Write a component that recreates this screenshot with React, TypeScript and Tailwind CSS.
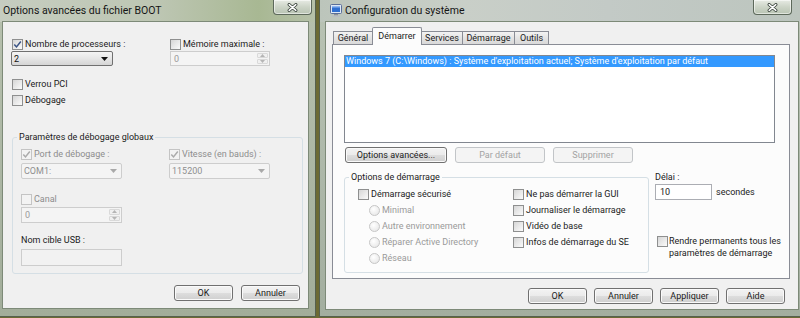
import React from "react";

const txt = "text-[9px] leading-[12px]";

function Check({ checked = false, disabled = false, className = "" }: { checked?: boolean; disabled?: boolean; className?: string }) {
  return (
    <span
      className={`flex h-[11px] w-[11px] shrink-0 items-center justify-center border ${
        disabled ? "border-[#c4c4c4] bg-[#f3f3f3]" : "border-[#8e8f8f] bg-[linear-gradient(135deg,#d6d6d6,#fbfbfb)]"
      } ${className}`}
    >
      {checked ? (
        <svg width="9" height="9" viewBox="0 0 9 9">
          <path d="M1.3 4.4 3.5 6.9 7.8 1.5" fill="none" stroke={disabled ? "#ababab" : "#3a5385"} strokeWidth="1.5" />
        </svg>
      ) : null}
    </span>
  );
}

function Radio() {
  return (
    <span className="h-[11px] w-[11px] shrink-0 rounded-full border border-[#c6c6c6] bg-[radial-gradient(circle_at_40%_35%,#ffffff,#e3e3e3)]" />
  );
}

function Btn({ label, className = "", disabled = false }: { label: string; className?: string; disabled?: boolean }) {
  return (
    <div
      className={`flex h-[16px] shrink-0 items-center justify-center rounded-[3px] border ${txt} ${
        disabled
          ? "border-[#c2c5c8] bg-[#f4f4f4] text-[#a3a3a3]"
          : "border-[#707070] bg-[linear-gradient(180deg,#f3f3f3_0%,#ebebeb_48%,#dddddd_52%,#cfcfcf_100%)] text-[#1b1b1b] shadow-[inset_0_0_0_1px_#fafafa]"
      } ${className}`}
    >
      {label}
    </div>
  );
}

function Combo({ value, disabled = false, className = "" }: { value: string; disabled?: boolean; className?: string }) {
  return (
    <div
      className={`flex items-center justify-between rounded-[2px] border pl-[2px] pr-[4px] ${txt} ${
        disabled
          ? "border-[#cdcdcd] bg-[#f4f4f4] text-[#8f8f8f]"
          : "border-[#707070] bg-[linear-gradient(180deg,#f4f4f4,#e6e6e6_50%,#d5d5d5)] text-[#111111]"
      } ${className}`}
    >
      <span>{value}</span>
      <svg width="7" height="4" viewBox="0 0 7 4">
        <path d="M0 0h7L3.5 4z" fill={disabled ? "#a9a9a9" : "#111111"} />
      </svg>
    </div>
  );
}

function Spin({ value, className = "" }: { value: string; className?: string }) {
  return (
    <div className={`flex items-stretch border border-[#cdcdcd] bg-[#f4f4f4] ${className}`}>
      <span className={`flex flex-1 items-center pl-[3px] text-[#9a9a9a] ${txt}`}>{value}</span>
      <div className="flex w-[12px] flex-col gap-px p-px pl-0">
        <div className="flex flex-1 items-center justify-center rounded-[1px] border border-[#d9d9d9] bg-[#f0f0f0]">
          <svg width="5" height="3" viewBox="0 0 5 3">
            <path d="M0 3h5L2.5 0z" fill="#b5b5b5" />
          </svg>
        </div>
        <div className="flex flex-1 items-center justify-center rounded-[1px] border border-[#d9d9d9] bg-[#f0f0f0]">
          <svg width="5" height="3" viewBox="0 0 5 3">
            <path d="M0 0h5L2.5 3z" fill="#b5b5b5" />
          </svg>
        </div>
      </div>
    </div>
  );
}

function Close({ className = "" }: { className?: string }) {
  return (
    <div
      className={`flex h-[15px] w-[39px] shrink-0 items-center justify-center rounded-b-[4px] border border-t-0 border-[#5d695b] bg-[linear-gradient(180deg,#e7ebe4,#ccd4c7_50%,#b9c4b3)] shadow-[inset_0_0_0_1px_rgba(255,255,255,0.55)] ${className}`}
    >
      <svg width="11" height="9" viewBox="0 0 11 9">
        <path d="M2.2 1.6 8.8 7.4 M8.8 1.6 2.2 7.4" stroke="#37413a" strokeWidth="3.2" strokeLinecap="round" />
        <path d="M2.2 1.6 8.8 7.4 M8.8 1.6 2.2 7.4" stroke="#ffffff" strokeWidth="1.5" strokeLinecap="round" />
      </svg>
    </div>
  );
}

function MsconfigIcon() {
  return (
    <svg width="12" height="13" viewBox="0 0 12 13">
      <rect x="0.5" y="0.5" width="11" height="9" rx="1" fill="#dfe8f5" stroke="#5a6f99" />
      <rect x="2" y="2" width="8" height="6" fill="#2f6fd0" />
      <rect x="2" y="2" width="8" height="1.5" fill="#8fb6ef" />
      <rect x="4" y="10" width="4" height="1.5" fill="#8b8f96" />
      <rect x="2.5" y="11.5" width="7" height="1.5" fill="#b9bdc4" />
    </svg>
  );
}

function Row({ children, className = "" }: { children: React.ReactNode; className?: string }) {
  return <div className={`flex h-[12px] items-center gap-[2px] ${txt} ${className}`}>{children}</div>;
}

function LeftWindow() {
  return (
    <div className="flex h-[317px] w-[316px] shrink-0 flex-col border-r border-b border-[#56614f] bg-[linear-gradient(180deg,#b7c1ae,#a2ad9a)]">
      <div className="flex h-[22px] shrink-0 items-start justify-between bg-[linear-gradient(90deg,#c6cdc0_0%,#bdc6b3_50%,#a8b893_82%,#b6c1a9_100%)]">
        <span className="pl-[3px] pt-[4px] text-[10.5px] leading-[13px] text-[#151515]">Options avancées du fichier BOOT</span>
        <Close className="mr-[3px]" />
      </div>
      <div className="ml-[3px] flex h-[286px] w-[305px] flex-col bg-[#f0f0f0] pl-[8px] pt-[16px] text-[#1b1b1b] shadow-[0_0_0_1px_#7d8a78]">
        <div className="grid grid-cols-[159px_100px]">
          <Row className="pl-[1px]">
            <Check checked />
            <span>Nombre de processeurs :</span>
          </Row>
          <Row>
            <Check />
            <span>Mémoire maximale :</span>
          </Row>
          <Combo value="2" className="mt-[1px] h-[15px] w-[102px]" />
          <Spin value="0" className="mt-[1px] h-[15px] w-[100px]" />
        </div>
        <Row className="mt-[12px] pl-[1px]">
          <Check />
          <span>Verrou PCI</span>
        </Row>
        <Row className="mt-[4px] pl-[1px]">
          <Check />
          <span>Débogage</span>
        </Row>
        <fieldset className="mt-[25px] ml-[1px] w-[291px] rounded-[3px] border border-[#d5dfe5] pb-[7px]">
          <legend className={`ml-[4px] px-[2px] ${txt}`}>Paramètres de débogage globaux</legend>
          <div className="grid grid-cols-[148px_101px] pl-[8px] pt-[5px]">
            <Row className="text-[#8d8d8d]">
              <Check checked disabled />
              <span>Port de débogage :</span>
            </Row>
            <Row className="text-[#8d8d8d]">
              <Check checked disabled />
              <span>Vitesse (en bauds) :</span>
            </Row>
            <Combo value="COM1:" disabled className="mt-[3px] h-[16px] w-[101px]" />
            <Combo value="115200" disabled className="mt-[3px] h-[16px] w-[101px]" />
            <Row className="col-span-2 mt-[14px] text-[#8d8d8d]">
              <Check disabled />
              <span>Canal</span>
            </Row>
            <Spin value="0" className="col-span-2 mt-[2px] h-[16px] w-[101px]" />
            <div className={`col-span-2 mt-[11px] ${txt}`}>Nom cible USB :</div>
            <div className="col-span-2 mt-[3px] h-[17px] w-[101px] border border-[#cdcdcd] bg-[#f2f2f2]" />
          </div>
        </fieldset>
        <div className="mt-[11px] flex justify-end gap-[8px] pr-[8px]">
          <Btn label="OK" className="w-[59px]" />
          <Btn label="Annuler" className="w-[59px]" />
        </div>
      </div>
    </div>
  );
}

function Tab({ label, active = false, className = "" }: { label: string; active?: boolean; className?: string }) {
  return (
    <div
      className={`flex shrink-0 items-center justify-center border border-b-0 border-[#898c95] ${txt} text-[#1b1b1b] ${
        active
          ? "relative z-10 -mb-px h-[18px] rounded-t-[2px] bg-[#fcfcfc] pb-[2px]"
          : "h-[13px] bg-[linear-gradient(180deg,#f3f3f3,#e4e4e4_50%,#d9d9d9)]"
      } ${className}`}
    >
      {label}
    </div>
  );
}

function RightWindow() {
  return (
    <div className="flex h-[317px] w-[481px] shrink-0 flex-col border-l border-b border-[#56614f] bg-[linear-gradient(180deg,#b9c3b4,#a3ae9f)]">
      <div className="flex h-[22px] shrink-0 items-start justify-between bg-[linear-gradient(90deg,#bcc5bb_0%,#c9cfc8_30%,#c3cac6_60%,#bcc5be_100%)]">
        <div className="flex items-center gap-[3px] pl-[10px] pt-[4px]">
          <MsconfigIcon />
          <span className="text-[10.5px] leading-[13px] text-[#151515]">Configuration du système</span>
        </div>
        <Close className="mr-[8px]" />
      </div>
      <div className="ml-[6px] flex h-[287px] w-[472px] flex-col bg-[#f0f0f0] text-[#1b1b1b] shadow-[0_0_0_1px_#7d8a78]">
        <div className="mt-[5px] ml-[7px] flex h-[17px] items-end">
          <Tab label="Général" className="w-[40px]" />
          <Tab label="Démarrer" active className="-ml-px w-[50px]" />
          <Tab label="Services" className="-ml-px w-[42px]" />
          <Tab label="Démarrage" className="-ml-px w-[53px]" />
          <Tab label="Outils" className="-ml-px w-[35px]" />
        </div>
        <div className="ml-[6px] flex h-[235px] w-[458px] flex-col border border-[#898c95] bg-[#fcfcfc]">
          <div className="mt-[10px] ml-[11px] h-[88px] w-[431px] border border-[#828790] bg-white">
            <div className="h-[11px] bg-[#3399ff] pl-[1px] text-[9px] leading-[11px] text-white">
              Windows 7 (C:\Windows) : Système d'exploitation actuel; Système d'exploitation par défaut
            </div>
          </div>
          <div className="mt-[4px] ml-[12px] flex gap-[8px]">
            <Btn label="Options avancées..." className="w-[102px]" />
            <Btn label="Par défaut" disabled className="w-[90px]" />
            <Btn label="Supprimer" disabled className="w-[80px]" />
          </div>
          <div className="mt-[8px] ml-[11px] flex items-start">
            <fieldset className="w-[305px] rounded-[3px] border border-[#d5dfe5] pb-[6px]">
              <legend className={`ml-[4px] px-[2px] ${txt}`}>Options de démarrage</legend>
              <div className="grid grid-cols-[155px_auto] pl-[13px] pt-[3px]">
                <div className="flex flex-col">
                  <div className={`flex h-[16px] items-center gap-[2px] ${txt}`}>
                    <Check />
                    <span>Démarrage sécurisé</span>
                  </div>
                  {["Minimal", "Autre environnement", "Réparer Active Directory", "Réseau"].map((r) => (
                    <div key={r} className={`flex h-[16px] items-center gap-[2px] pl-[11px] text-[#9a9a9a] ${txt}`}>
                      <Radio />
                      <span>{r}</span>
                    </div>
                  ))}
                </div>
                <div className="flex flex-col">
                  {["Ne pas démarrer la GUI", "Journaliser le démarrage", "Vidéo de base", "Infos de démarrage du SE"].map((c) => (
                    <div key={c} className={`flex h-[16px] items-center gap-[2px] ${txt}`}>
                      <Check />
                      <span>{c}</span>
                    </div>
                  ))}
                </div>
              </div>
            </fieldset>
            <div className={`ml-[6px] flex flex-col ${txt}`}>
              <span>Délai :</span>
              <div className="mt-[1px] flex items-center gap-[4px]">
                <div className="flex h-[16px] w-[57px] items-center border border-[#abadb3] bg-white pl-[4px]">10</div>
                <span>secondes</span>
              </div>
              <div className="mt-[35px] flex items-start gap-px pl-[2px]">
                <Check className="mt-px" />
                <span>
                  Rendre permanents tous les
                  <br />
                  paramètres de démarrage
                </span>
              </div>
            </div>
          </div>
        </div>
        <div className="mt-[9px] flex justify-end gap-[7px] pr-[13px]">
          <Btn label="OK" className="w-[59px]" />
          <Btn label="Annuler" className="w-[59px]" />
          <Btn label="Appliquer" className="w-[59px]" />
          <Btn label="Aide" className="w-[59px]" />
        </div>
      </div>
    </div>
  );
}

export default function App() {
  return (
    <div className="flex h-[318px] w-[800px] gap-[3px] overflow-hidden bg-[#6c6a34] font-['Roboto',sans-serif]">
      <LeftWindow />
      <RightWindow />
    </div>
  );
}
